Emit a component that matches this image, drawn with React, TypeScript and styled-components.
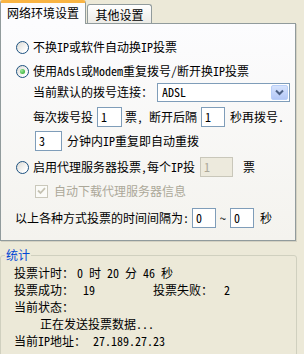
import React from "react";
import styled, { createGlobalStyle, css } from "styled-components";

const GlobalStyle = createGlobalStyle`
  html, body { margin: 0; padding: 0; background: #ECE9D8; }
  body {
    font-family: "Noto Sans CJK SC", "Noto Sans", sans-serif;
    font-size: 12px;
    color: #000;
    font-feature-settings: "hwid" 1;
  }
  * { box-sizing: border-box; }
`;

const Window = styled.div`
  width: 304px;
  height: 354px;
  overflow: hidden;
  background: #ECE9D8;
`;

const TabStrip = styled.div`
  display: flex;
  align-items: flex-end;
  height: 23px;
  position: relative;
  z-index: 1;
`;

const Tab = styled.div<{ $active?: boolean; $w: number }>`
  width: ${(p) => p.$w}px;
  display: flex;
  align-items: center;
  justify-content: center;
  line-height: 12px;
  border: 1px solid #919B9C;
  border-bottom: none;
  border-radius: 3px 3px 0 0;
  ${(p) =>
    p.$active
      ? css`
          height: 24px;
          margin-bottom: -1px;
          border-top: 3px solid #F9B443;
          background: #FCFCFE;
          padding-bottom: 1px;
        `
      : css`
          height: 19px;
          margin-left: 1px;
          background: linear-gradient(#FFFFFF, #ECEBE6);
          padding-top: 2px;
        `}
`;

const Panel = styled.div`
  width: 296px;
  height: 218px;
  border: 1px solid #919B9C;
  background: linear-gradient(#FCFCFE, #F4F3EE);
  box-shadow: 1px 1px 0 rgba(0, 0, 0, 0.1);
  padding-top: 13px;
  display: flex;
  flex-direction: column;
`;

const Row = styled.div<{ $mt?: number; $pl?: number; $h?: number }>`
  display: flex;
  align-items: center;
  height: ${(p) => p.$h ?? 20}px;
  margin-top: ${(p) => p.$mt ?? 0}px;
  padding-left: ${(p) => p.$pl ?? 0}px;
  white-space: nowrap;
  line-height: 12px;
`;

const Text = styled.span<{ $ml?: number; $muted?: boolean }>`
  margin-left: ${(p) => p.$ml ?? 0}px;
  color: ${(p) => (p.$muted ? "#ACA899" : "#000")};
`;

const Radio = styled.span<{ $checked?: boolean }>`
  width: 13px;
  height: 13px;
  border-radius: 50%;
  border: 1px solid #1C5180;
  background: linear-gradient(135deg, #DCDBD5, #FFFFFF 80%);
  margin-right: 4px;
  flex: none;
  display: flex;
  align-items: center;
  justify-content: center;
  &::after {
    content: "";
    display: ${(p) => (p.$checked ? "block" : "none")};
    width: 5px;
    height: 5px;
    border-radius: 50%;
    background: radial-gradient(circle at 35% 35%, #9BEA9B, #21A121);
  }
`;

const TextBox = styled.span<{ $w: number; $ml?: number; $disabled?: boolean }>`
  width: ${(p) => p.$w}px;
  height: 20px;
  margin-left: ${(p) => p.$ml ?? 0}px;
  border: 1px solid ${(p) => (p.$disabled ? "#C9C7BA" : "#7F9DB9")};
  background: ${(p) => (p.$disabled ? "#EDEADD" : "#FFFFFF")};
  color: ${(p) => (p.$disabled ? "#ACA899" : "#000")};
  padding-left: 3px;
  display: flex;
  align-items: center;
  flex: none;
`;

const Select = styled.span<{ $w: number; $ml?: number }>`
  width: ${(p) => p.$w}px;
  height: 19px;
  margin-left: ${(p) => p.$ml ?? 0}px;
  border: 1px solid #7F9DB9;
  background: #FFFFFF;
  display: flex;
  align-items: center;
  justify-content: space-between;
  padding: 0 1px 0 4px;
  flex: none;
`;

const DropButton = styled.span`
  width: 17px;
  height: 15px;
  border: 1px solid #B9CFF8;
  border-radius: 2px;
  background: linear-gradient(#D6E3FD, #B4C8F6);
  display: flex;
  align-items: center;
  justify-content: center;
`;

const CheckBox = styled.span`
  width: 13px;
  height: 13px;
  border: 1px solid #CAC8BB;
  background: #FBFBF8;
  display: flex;
  align-items: center;
  justify-content: center;
  flex: none;
`;

const GroupBox = styled.fieldset`
  margin: 7px 0 0 0;
  width: 297px;
  height: 140px;
  border: 1px solid #D0D0BF;
  border-radius: 3px;
  padding: 2px 0 0 4px;
`;

const Legend = styled.legend`
  color: #0046D5;
  padding: 0 1px;
  line-height: 14px;
`;

const StatRow = styled.div<{ $pl?: number }>`
  display: flex;
  align-items: center;
  height: 17px;
  line-height: 12px;
  padding-left: ${(p) => p.$pl ?? 9}px;
  white-space: nowrap;
`;

const StatCell = styled.span<{ $ml?: number; $w?: number }>`
  margin-left: ${(p) => p.$ml ?? 0}px;
  ${(p) => (p.$w ? `width: ${p.$w}px; flex: none;` : "")}
`;

export default function App() {
  return (
    <Window>
      <GlobalStyle />
      <TabStrip>
        <Tab $active $w={86}>网络环境设置</Tab>
        <Tab $w={65}>其他设置</Tab>
      </TabStrip>
      <Panel>
        <Row $pl={15}>
          <Radio />
          <Text>不换IP或软件自动换IP投票</Text>
        </Row>
        <Row $mt={4} $pl={15}>
          <Radio $checked />
          <Text>使用Adsl或Modem重复拨号/断开换IP投票</Text>
        </Row>
        <Row $mt={1} $pl={32}>
          <Text>当前默认的拨号连接：</Text>
          <Select $w={133} $ml={4}>
            <span>ADSL</span>
            <DropButton>
              <svg width="9" height="7" viewBox="0 0 9 7">
                <path d="M1 1.5 L4.5 5 L8 1.5" fill="none" stroke="#4D6185" strokeWidth="2" />
              </svg>
            </DropButton>
          </Select>
        </Row>
        <Row $mt={5} $pl={32}>
          <Text>每次拨号投</Text>
          <TextBox $w={25} $ml={4}>1</TextBox>
          <Text $ml={3}>票, 断开后隔</Text>
          <TextBox $w={24} $ml={4}>1</TextBox>
          <Text $ml={5}>秒再拨号.</Text>
        </Row>
        <Row $mt={4} $pl={34}>
          <TextBox $w={27}>3</TextBox>
          <Text $ml={5}>分钟内IP重复即自动重拨</Text>
        </Row>
        <Row $mt={6} $pl={15}>
          <Radio />
          <Text>启用代理服务器投票，每个IP投</Text>
          <TextBox $w={33} $ml={5} $disabled>1</TextBox>
          <Text $ml={10}>票</Text>
        </Row>
        <Row $mt={4} $pl={34}>
          <CheckBox>
            <svg width="9" height="8" viewBox="0 0 9 8">
              <path d="M1 3.5 L3.5 6 L8 1.2" fill="none" stroke="#C5C2B2" strokeWidth="1.8" />
            </svg>
          </CheckBox>
          <Text $ml={6} $muted>自动下载代理服务器信息</Text>
        </Row>
        <Row $mt={7} $pl={14}>
          <Text>以上各种方式投票的时间间隔为:</Text>
          <TextBox $w={24} $ml={3}>0</TextBox>
          <Text $ml={4}>~</Text>
          <TextBox $w={24} $ml={4}>0</TextBox>
          <Text $ml={6}>秒</Text>
        </Row>
      </Panel>
      <GroupBox>
        <Legend>统计</Legend>
        <StatRow>
          <StatCell>投票计时：</StatCell>
          <StatCell $ml={3}>0 时 20 分 46 秒</StatCell>
        </StatRow>
        <StatRow>
          <StatCell>投票成功：</StatCell>
          <StatCell $ml={9} $w={70}>19</StatCell>
          <StatCell>投票失败：</StatCell>
          <StatCell $ml={11}>2</StatCell>
        </StatRow>
        <StatRow>
          <StatCell>当前状态：</StatCell>
        </StatRow>
        <StatRow $pl={35}>
          <StatCell>正在发送投票数据...</StatCell>
        </StatRow>
        <StatRow>
          <StatCell>当前IP地址：</StatCell>
          <StatCell $ml={7}>27.189.27.23</StatCell>
        </StatRow>
      </GroupBox>
    </Window>
  );
}
